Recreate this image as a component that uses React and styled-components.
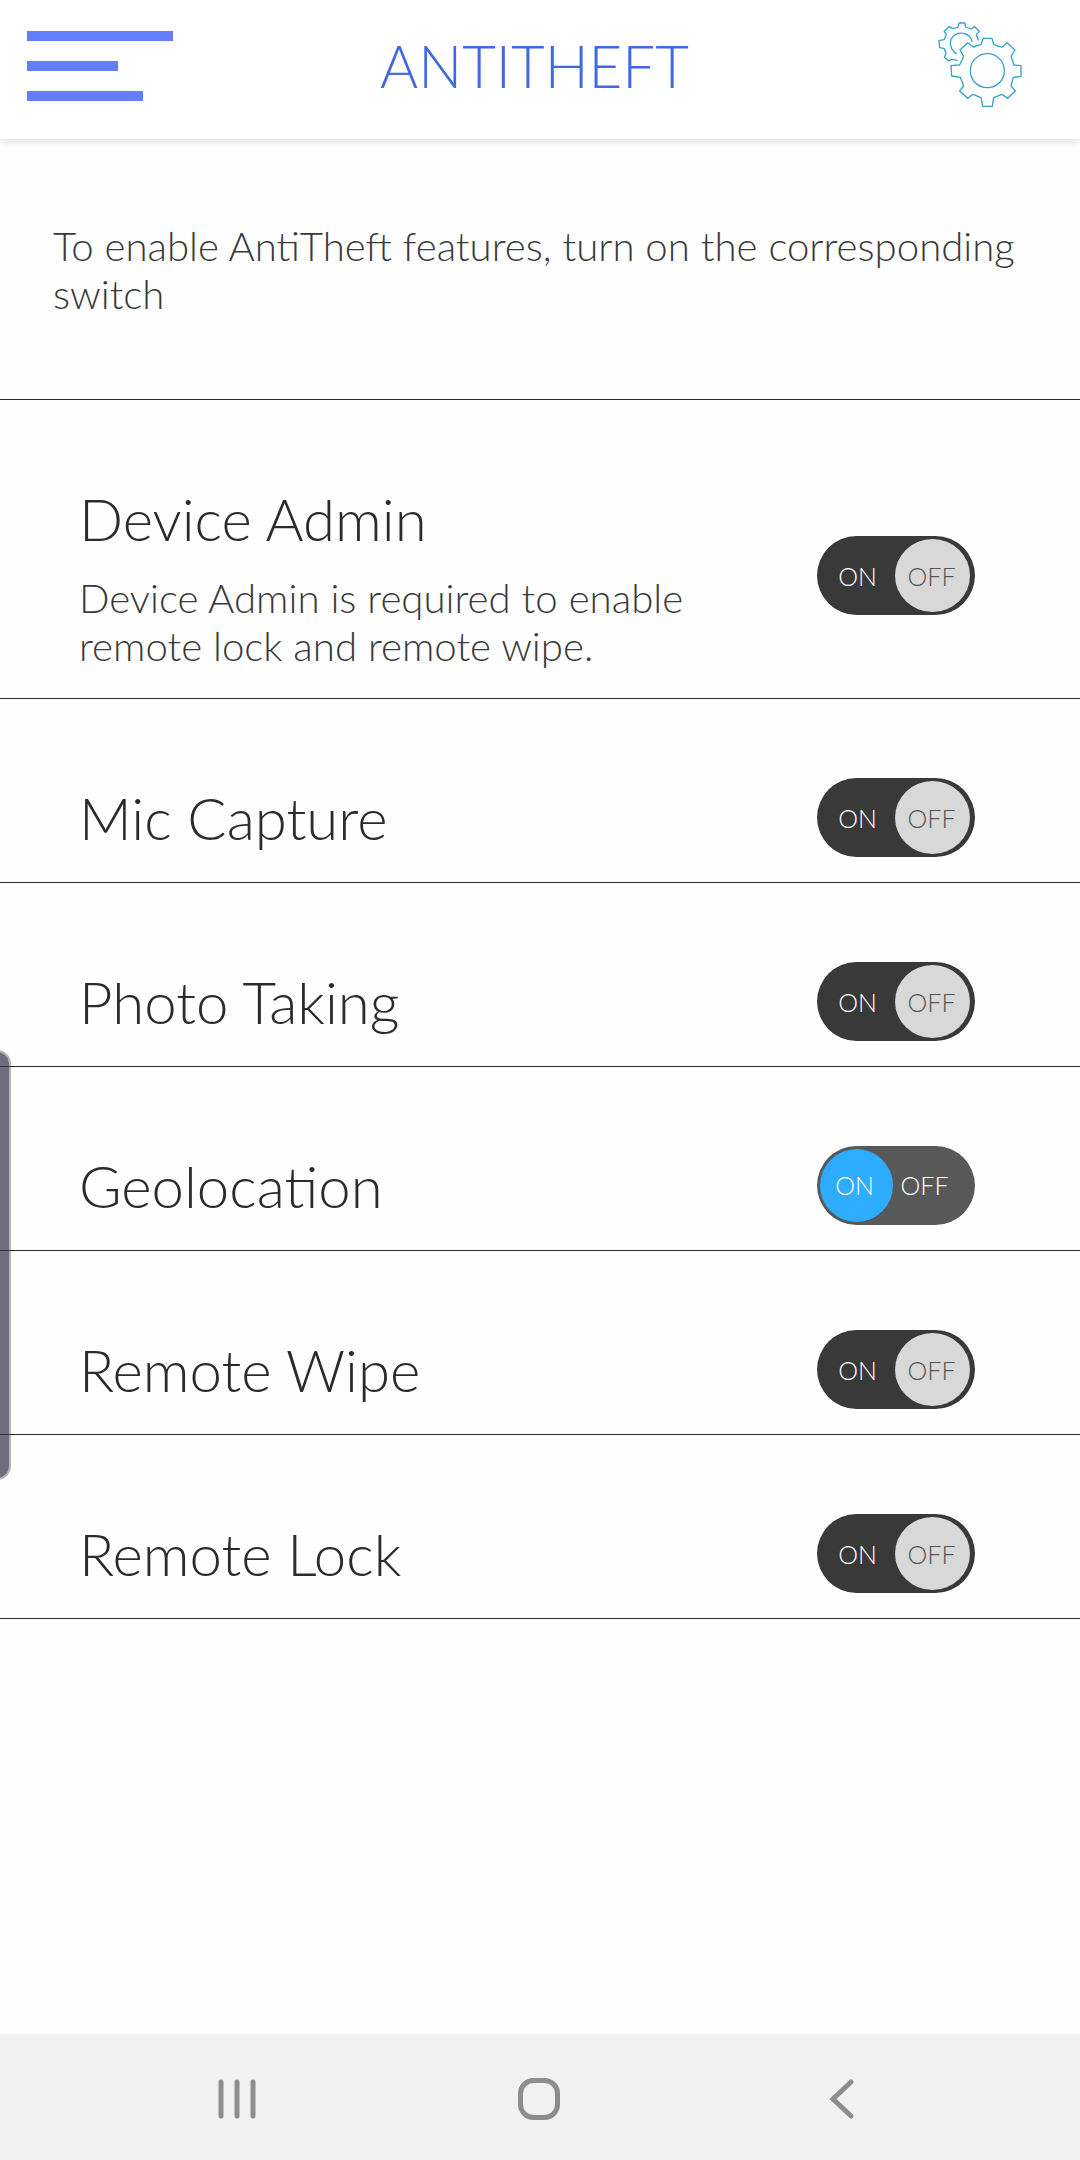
import React, { useState } from 'react';
import styled, { createGlobalStyle } from 'styled-components';

const GlobalStyle = createGlobalStyle`
  *, *::before, *::after { box-sizing: border-box; }
  body { margin: 0; background: #fefefe; }
`;

const Screen = styled.div`
  position: relative;
  display: flex;
  flex-direction: column;
  width: 1080px;
  height: 2160px;
  overflow: hidden;
  background: #fefefe;
  color: #2b2b2b;
  font-family: Lato, 'Open Sans', sans-serif;
  font-weight: 300;
`;

const Header = styled.header`
  display: grid;
  grid-template-columns: 290px 1fr 290px;
  align-items: center;
  flex: none;
  height: 139px;
  padding: 0 57px 7px 27px;
  background: #fff;
  box-shadow: 0 1px 9px rgba(0, 0, 0, 0.18);
`;

const MenuButton = styled.button`
  display: flex;
  flex-direction: column;
  gap: 20.5px;
  padding: 0;
  border: 0;
  background: none;
`;

const MenuBar = styled.span`
  width: ${(p) => p.$width}px;
  height: 9.5px;
  background: #647dfa;
`;

const PageTitle = styled.h1`
  margin: 0 0 1px;
  padding-left: 19px;
  text-align: center;
  white-space: nowrap;
  color: #4169e1;
  font-size: 58.2px;
  font-weight: 300;
  line-height: 68px;
`;

const SettingsButton = styled.button`
  justify-self: end;
  display: flex;
  padding: 0;
  border: 0;
  background: none;
`;

const Intro = styled.p`
  flex: none;
  height: 261px;
  margin: 0;
  padding: 83px 50px 0 53px;
  border-bottom: 1px solid #2b2b2f;
  color: #3a3a3a;
  font-size: 40.15px;
  line-height: 48px;
`;

const List = styled.ul`
  flex: 1;
  margin: 0;
  padding: 0;
  list-style: none;
`;

const Row = styled.li`
  display: flex;
  justify-content: space-between;
  align-items: flex-start;
  height: ${(p) => (p.$tall ? 299 : 184)}px;
  padding: 77px 105px 0 79px;
  border-bottom: 1px solid #2b2b2f;
`;

const RowText = styled.div`
  display: flex;
  flex-direction: column;
  gap: 13px;
`;

const RowTitle = styled.h2`
  margin: 0;
  font-size: 58.1px;
  font-weight: 300;
  line-height: 84px;
`;

const RowNote = styled.p`
  width: 640px;
  margin: 0;
  color: #3a3a3a;
  font-size: 40.2px;
  line-height: 48px;
`;

const Track = styled.button`
  display: flex;
  align-items: center;
  justify-content: space-between;
  flex: none;
  width: 158px;
  height: 79px;
  margin-top: ${(p) => (p.$tall ? 59 : 2)}px;
  padding: ${(p) => (p.$on ? '0 12px 0 3px' : '0 5px 0 3px')};
  border: 0;
  border-radius: 40px;
  background: ${(p) => (p.$on ? '#585858' : '#393939')};
  font: 300 25px/30px Lato, sans-serif;
`;

const Half = styled.span`
  display: flex;
  align-items: center;
  justify-content: center;
  width: ${(p) => p.$width}px;
  height: 73px;
  padding: ${(p) => p.$inset || 0};
  border-radius: 50%;
  background: ${(p) => p.$fill || 'transparent'};
  color: ${(p) => p.$ink};
`;

const EdgeHandle = styled.div`
  position: absolute;
  left: -20px;
  top: 1050px;
  width: 31px;
  height: 430px;
  border: 2px solid rgba(52, 47, 69, 0.36);
  border-radius: 14px;
  background: rgba(52, 47, 69, 0.7) padding-box;
`;

const NavBar = styled.nav`
  display: flex;
  align-items: center;
  justify-content: space-between;
  flex: none;
  height: 126px;
  padding: 4px 225px 0 217px;
  background: #f1f1f1;
`;

const NavButton = styled.button`
  display: flex;
  margin: 0 ${(p) => p.$nudge || 0}px 0 0;
  padding: 0;
  border: 0;
  background: none;
`;

const Gears = () => (
  <svg width="86" height="90" viewBox="52 34 258 270" fill="none" stroke="#35a2c8" strokeWidth="4" strokeLinejoin="round" strokeLinecap="round">
    <circle cx="203" cy="183" r="51" />
    <path d="M191 86H217L222 104L239 111L248 112L262 99L286 121L274 140L283 166L304 168V200L281 203L274 229L287 244L264 266L247 254L222 264L218 290H189L184 264L160 254L144 266L120 244L132 229L122 203L96 199L94 168L120 166L132 140L121 121L144 99L160 112L184 104Z" />
    <path d="M110 132C94 122 86 98 98 83C115 62 151 69 157 95" />
    <path d="M112 152L98 149L87 154L74 143L79 132L74 117L60 114L58 93L73 90L80 76L74 65L88 51L99 57L115 53L118 40H135L138 52L154 58L165 51L179 65L170 75L176 91" />
  </svg>
);

const RecentsIcon = () => (
  <svg width="40" height="42" viewBox="0 0 40 42" stroke="#8d8d8d" strokeWidth="5" strokeLinecap="round">
    <path d="M4 4V38M20 4V38M36 4V38" />
  </svg>
);

const HomeIcon = () => (
  <svg width="44" height="44" viewBox="0 0 44 44" fill="none" stroke="#8d8d8d" strokeWidth="5">
    <rect x="3.5" y="3.5" width="37" height="37" rx="13" />
  </svg>
);

const BackIcon = () => (
  <svg width="26" height="42" viewBox="0 0 26 42" fill="none" stroke="#8d8d8d" strokeWidth="5" strokeLinecap="round">
    <path d="M22 4L4 21L22 38" />
  </svg>
);

const FEATURES = [
  { title: 'Device Admin', note: 'Device Admin is required to enable remote lock and remote wipe.', on: false },
  { title: 'Mic Capture', on: false },
  { title: 'Photo Taking', on: false },
  { title: 'Geolocation', on: true },
  { title: 'Remote Wipe', on: false },
  { title: 'Remote Lock', on: false },
];

function Feature({ title, note, on: initial }) {
  const [on, setOn] = useState(initial);
  const tall = Boolean(note);
  return (
    <Row $tall={tall}>
      <RowText>
        <RowTitle>{title}</RowTitle>
        {note && <RowNote>{note}</RowNote>}
      </RowText>
      <Track $on={on} $tall={tall} role="switch" aria-checked={on} aria-label={title} onClick={() => setOn(!on)}>
        <Half $width={on ? 73 : 75} $inset={on && '0 4px 2px 0'} $fill={on && '#2eacff'} $ink="#fff">ON</Half>
        <Half $width={on ? 70 : 75} $inset={on ? '0 7px 2px 0' : '0 2px 0 0'} $fill={!on && '#d8d8d8'} $ink={on ? '#fff' : '#555'}>OFF</Half>
      </Track>
    </Row>
  );
}

export default function App() {
  return (
    <Screen>
      <GlobalStyle />
      <Header>
        <MenuButton aria-label="Menu">
          <MenuBar $width={146} />
          <MenuBar $width={91} />
          <MenuBar $width={116} />
        </MenuButton>
        <PageTitle>ANTITHEFT</PageTitle>
        <SettingsButton aria-label="Settings"><Gears /></SettingsButton>
      </Header>
      <Intro>To enable AntiTheft features, turn on the corresponding switch</Intro>
      <List>
        {FEATURES.map((f) => <Feature key={f.title} {...f} />)}
      </List>
      <NavBar>
        <NavButton aria-label="Recent apps"><RecentsIcon /></NavButton>
        <NavButton aria-label="Home" $nudge={8}><HomeIcon /></NavButton>
        <NavButton aria-label="Back"><BackIcon /></NavButton>
      </NavBar>
      <EdgeHandle />
    </Screen>
  );
}
